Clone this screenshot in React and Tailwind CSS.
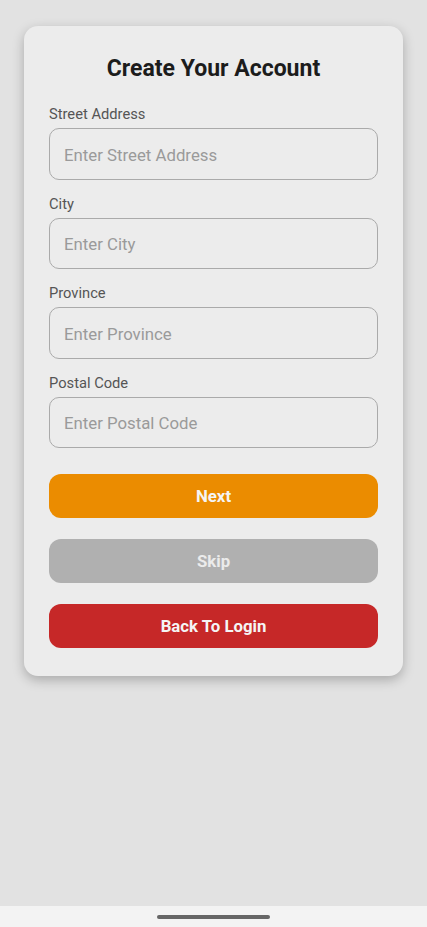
import React, { useState } from "react";

const fields = [
  { name: "street", label: "Street Address", placeholder: "Enter Street Address" },
  { name: "city", label: "City", placeholder: "Enter City" },
  { name: "province", label: "Province", placeholder: "Enter Province" },
  { name: "postal", label: "Postal Code", placeholder: "Enter Postal Code" },
];

const App = () => {
  const [form, setForm] = useState({ street: "", city: "", province: "", postal: "" });

  const handleChange = (e) => {
    const { name, value } = e.target;
    setForm((prev) => ({ ...prev, [name]: value }));
  };

  return (
    <div
      className="w-full min-h-screen flex flex-col bg-[#e2e2e2]"
      style={{ fontFamily: "Roboto, 'Liberation Sans', sans-serif" }}
    >
      <div className="flex-1 px-6 pt-[26px]">
        <div className="bg-[#ececec] rounded-[14px] px-[25px] pt-[29px] pb-[28px] shadow-[0_4px_12px_rgba(0,0,0,0.25)]">
          <h2 className="text-center text-[23px] leading-[28px] font-bold text-[#1c1c1c] mb-[21px]">
            Create Your Account
          </h2>

          <form onSubmit={(e) => e.preventDefault()} className="flex flex-col gap-[14px]">
            {fields.map((f) => (
              <div key={f.name}>
                <label htmlFor={f.name} className="block text-[14.7px] leading-[20px] text-[#555555] mb-1">
                  {f.label}
                </label>
                <input
                  id={f.name}
                  name={f.name}
                  type="text"
                  value={form[f.name]}
                  onChange={handleChange}
                  placeholder={f.placeholder}
                  className="w-full h-[51.5px] bg-transparent border border-[#aaaaaa] rounded-[10px] px-[14px] pt-[2px] text-[16.8px] text-[#333] placeholder:text-[#9a9a9a] outline-none"
                />
              </div>
            ))}

            <div className="flex flex-col gap-[21px] mt-[12px]">
              <button type="submit" className="h-[44px] pt-[2px] rounded-[12px] bg-[#eb8c00] text-[#f5f5f5] text-[16.8px] font-bold">
                Next
              </button>
              <button type="button" className="h-[44px] pt-[2px] rounded-[12px] bg-[#b0b0b0] text-[#ebebeb] text-[16.8px] font-bold">
                Skip
              </button>
              <button type="button" className="h-[44px] pt-[2px] rounded-[12px] bg-[#c62828] text-[#f5f5f5] text-[16.8px] font-bold">
                Back To Login
              </button>
            </div>
          </form>
        </div>
      </div>

      <div className="h-[21px] bg-[#f3f3f3] flex items-center justify-center">
        <div className="w-[113px] h-[4px] rounded-full bg-[#666666]" />
      </div>
    </div>
  );
};

export default App;
